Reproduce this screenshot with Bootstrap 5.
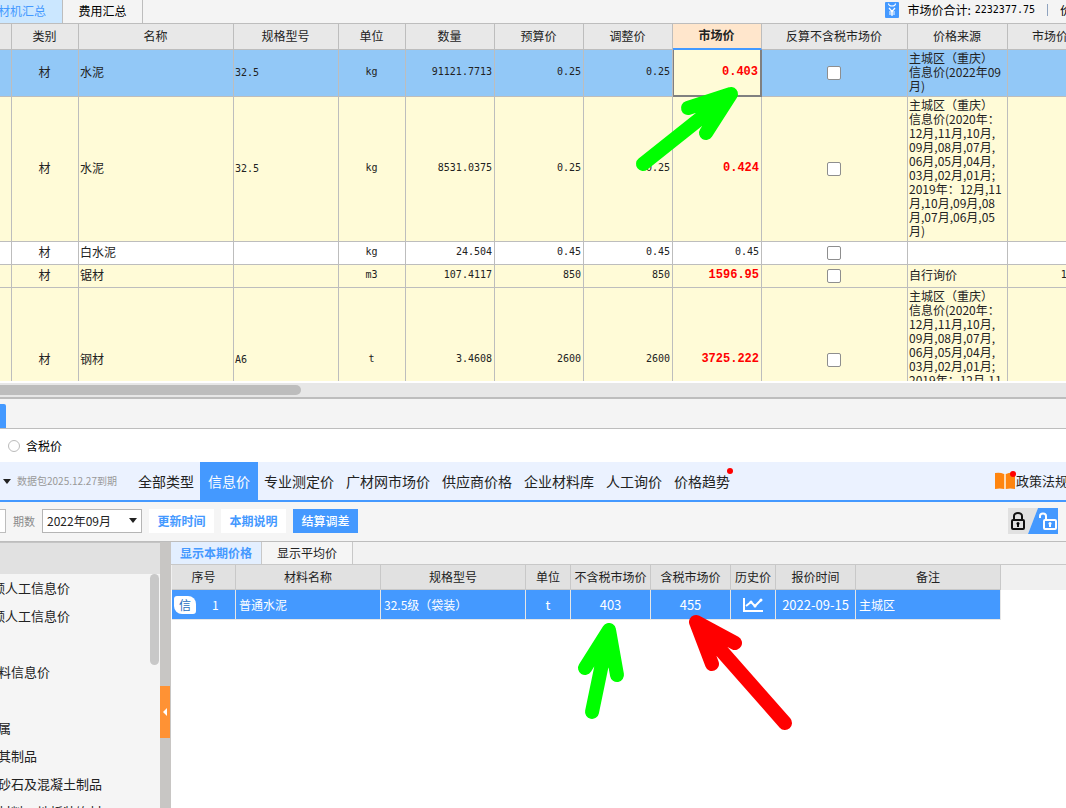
<!DOCTYPE html>
<html lang="zh-CN">
<head>
<meta charset="utf-8">
<meta name="viewport" content="width=device-width, initial-scale=1">
<title>人材机汇总</title>
<link href="https://cdn.jsdelivr.net/npm/bootstrap@5.3.0/dist/css/bootstrap.min.css" rel="stylesheet">
<style>
  :root { --blue: #4499ff; --line: #bdbdbd; }
  body { font-family: "Noto Sans CJK SC", sans-serif; font-size: 12px; line-height: 14px; color: #222; background: #f4f4f4; }
  button, select, input { font: inherit; }
  a { color: inherit; text-decoration: none; }
  .nowrap { white-space: nowrap; }
  .mono { font-family: "DejaVu Sans Mono", monospace; font-size: 10px; }

  .topbar { height: 24px; border-bottom: 1px solid var(--line); }
  .toptab { width: 80px; border: 0; border-right: 1px solid var(--line); background: none; padding: 0 0 2px; color: #000; }
  .toptab.first { width: 63px; background: #cbe7ff; color: var(--blue); display: flex; align-items: center; justify-content: flex-end; padding-right: 16px; }
  .total-sep { width: 1px; height: 12px; margin: 0 12px; background: #8fa3bf; }
  .next-total { width: 6px; }

  .sheet-pane { flex: 357 1 0; min-height: 0; overflow: hidden; border-bottom: 2px solid #fff; }
  .sheet { table-layout: fixed; width: 1118px; border-collapse: separate; border-spacing: 0; }
  .sheet th, .sheet td { border-right: 1px solid var(--line); border-bottom: 1px solid var(--line); padding: 0 2px 2px 1px; vertical-align: middle; overflow: hidden; white-space: nowrap; }
  .sheet th { height: 26px; background: #e8e8e8; font-weight: 400; text-align: center; }
  .sheet th.current { background: #ffe6cc; font-weight: 700; border-bottom: 2px solid var(--blue); }
  .sheet .mid { text-align: center; }
  .sheet .num { text-align: right; font-family: "DejaVu Sans Mono", monospace; font-size: 10px; }
  .sheet .changed { color: #f00; font-family: "Liberation Mono", monospace; font-size: 12px; font-weight: 700; }
  .sheet .short td { height: 23px; }
  .sheet .medium td { height: 47px; }
  .sheet .tall td { height: 145px; }
  .row-picked td { background: #92c8f7; }
  .row-edited td { background: #fffbd7; }
  .row-plain td { background: #fff; }
  .sheet td.cell-focus { background: #fffbd7; border-right: 2px solid #808080; border-bottom: 2px solid #808080; box-shadow: inset 1px 0 #808080; }
  .sheet td.tick { padding-bottom: 0; }
  .sheet .form-check-input { width: 14px; height: 14px; border: 1px solid #8e8e8e; border-radius: 2px; background-color: #fff; display: block; margin: 0 auto; }

  .hscroll { height: 16px; background: #e7e7e7; border-bottom: 2px solid var(--line); padding: 2px 0; }
  .hscroll-thumb { width: 301px; height: 10px; background: var(--line); border-radius: 0 5px 5px 0; }
  .gapbar { height: 30px; border-bottom: 1px solid var(--line); }
  .gapbar-tab { width: 6px; height: 24px; background: var(--blue); border-radius: 0 2px 0 0; }
  .taxline { height: 33px; background: #fff; padding-left: 8px; color: #000; gap: 6px; }
  .taxline .form-check-input { width: 12px; height: 12px; margin: 0; border: 1px solid #bbb; }
  .kinds { height: 40px; background: #ebf2ff; border-bottom: 2px solid var(--blue); }
  .caret { width: 0; height: 0; border: 4px solid transparent; border-top: 5px solid #222; border-bottom: 0; }
  .pack-row { gap: 6px; padding-left: 3px; }
  .pack { width: 115px; font-size: 10px; color: #999; }
  .kind { font-size: 14px; line-height: 20px; padding: 0 6px; }
  .kind.on { background: var(--blue); color: #fff; padding: 0 8px; }
  .dot { position: absolute; width: 6px; height: 6px; border-radius: 50%; background: #f00; top: -3px; right: -3px; }
  .policy { font-size: 13px; line-height: 18px; width: 72px; overflow: hidden; }

  .tools { height: 40px; background: #f5f5f5; border-bottom: 1px solid var(--line); padding-bottom: 1px; }
  .tool-row { gap: 7px; }
  .box-end { width: 6px; height: 24px; background: #fff; border: 1px solid var(--line); border-left: 0; }
  .period-label { width: 36px; padding-left: 7px; font-size: 11px; color: #8a8a8a; }
  .period { width: 100px; height: 24px; border: 1px solid #b5b5b5; background: #fff; padding: 0 4px; appearance: none; border-radius: 0; color: #222; }
  .period-arrow { position: absolute; right: 5px; top: 9px; pointer-events: none; }
  .tool { width: 65px; height: 24px; border: 0; padding: 0; background: #fff; color: var(--blue); font-weight: 700; }
  .tool.on { background: var(--blue); color: #fff; font-weight: 500; }

  .lower { flex: 266 1 0; min-height: 0; background: #fff; }
  .tree { width: 160px; background: #f5f5f5; }
  .tree-head { height: 32px; flex: none; background: #e1e1e1; border-top: 1px solid #c4c4c4; }
  .tree ul { font-size: 13px; line-height: 28px; }
  .tree li { height: 28px; margin-left: -2px; white-space: nowrap; }
  .tree li.deep { margin-left: -8px; }
  .tree-track { width: 10px; }
  .tree-thumb { width: 9px; height: 91px; border-radius: 5px; background: #c8c8c8; }
  .splitter { width: 11px; background: #c8c6c4; padding-top: 74px; }
  .fold { width: 10px; height: 52px; background: #ff9234; border: 0; padding: 0; }
  .subtabs { height: 23px; background: #f2f2f2; border-bottom: 1px solid #c8c8c8; }
  .subtab { width: 91px; border: 0; border-right: 1px solid #c8c8c8; background: #f5f5f5; padding: 0; color: #222; }
  .subtab.on { background: #e3efff; color: var(--blue); font-weight: 700; }
  .prices { table-layout: fixed; width: 829px; border-collapse: separate; border-spacing: 0; margin-left: 1px; }
  .prices th { height: 25px; padding: 0; font-weight: 400; text-align: center; background: #e1e1e1; border-right: 1px solid #c8c8c8; border-bottom: 1px solid #c8c8c8; white-space: nowrap; }
  .prices td { height: 30px; padding: 0 3px; background: var(--blue); color: #fff; border-right: 1px solid #e6e6e6; border-bottom: 1px solid #e6e6e6; white-space: nowrap; }
  .prices .fig { font-size: 13px; text-align: center; padding: 0; }
  .price-pane { background: linear-gradient(#f0f0f0 25px, #fff 25px); }
  .xin { width: 22px; height: 18px; margin-left: -1px; background: #fff; color: #2a6fc0; border-radius: 3px 8px 3px 8px; line-height: 17px; text-align: center; }
  .marks { position: absolute; left: 0; top: 0; pointer-events: none; }
</style>
</head>
<body class="vh-100 overflow-hidden d-flex flex-column position-relative">

<header class="topbar d-flex align-items-stretch flex-shrink-0 overflow-hidden">
  <button class="toptab first nowrap overflow-hidden" type="button">人材机汇总</button>
  <button class="toptab" type="button">费用汇总</button>
  <div class="ms-auto d-flex align-items-center nowrap text-black pb-1">
    <svg width="14" height="16" viewBox="0 0 14 16" class="me-2"><rect width="14" height="16" rx="1" fill="#4499ff"/><path d="M3.500 1.500a3.500 2.500 0 0 0 7 0M4 6l3 3.500L10 6M7 9.500V14M4 10h6M4 12h6" fill="none" stroke="#fff" stroke-width="1.200"/></svg>
    <span>市场价合计:</span><span class="mono ms-1">2232377.75</span>
    <span class="total-sep"></span><span class="next-total">价</span>
  </div>
</header>

<main class="sheet-pane">
  <table class="sheet">
    <colgroup><col style="width:12px"><col style="width:67px"><col style="width:155px"><col style="width:105px"><col style="width:67px"><col style="width:89px"><col style="width:89px"><col style="width:89px"><col style="width:89px"><col style="width:146px"><col style="width:100px"><col style="width:110px"></colgroup>
    <thead><tr><th></th><th>类别</th><th>名称</th><th>规格型号</th><th>单位</th><th>数量</th><th>预算价</th><th>调整价</th><th class="current">市场价</th><th>反算不含税市场价</th><th>价格来源</th><th>市场价合计</th></tr></thead>
    <tbody>
      <tr class="medium row-picked"><td></td><td class="mid">材</td><td>水泥</td><td><span class="mono">32.5</span></td><td class="mid mono">kg</td><td class="num">91121.7713</td><td class="num">0.25</td><td class="num">0.25</td><td class="num changed cell-focus">0.403</td><td class="tick"><input class="form-check-input" type="checkbox" aria-label="反算不含税市场价"></td><td>主城区（重庆）<br>信息价(2022年09<br>月)</td><td></td></tr>
      <tr class="tall row-edited"><td></td><td class="mid">材</td><td>水泥</td><td><span class="mono">32.5</span></td><td class="mid mono">kg</td><td class="num">8531.0375</td><td class="num">0.25</td><td class="num">0.25</td><td class="num changed">0.424</td><td class="tick"><input class="form-check-input" type="checkbox" aria-label="反算不含税市场价"></td><td>主城区（重庆）<br>信息价(2020年：<br>12月,11月,10月,<br>09月,08月,07月,<br>06月,05月,04月,<br>03月,02月,01月;<br>2019年：12月,11<br>月,10月,09月,08<br>月,07月,06月,05<br>月)</td><td></td></tr>
      <tr class="short row-plain"><td></td><td class="mid">材</td><td>白水泥</td><td></td><td class="mid mono">kg</td><td class="num">24.504</td><td class="num">0.45</td><td class="num">0.45</td><td class="num">0.45</td><td class="tick"><input class="form-check-input" type="checkbox" aria-label="反算不含税市场价"></td><td></td><td></td></tr>
      <tr class="short row-edited"><td></td><td class="mid">材</td><td>锯材</td><td></td><td class="mid mono">m3</td><td class="num">107.4117</td><td class="num">850</td><td class="num">850</td><td class="num changed">1596.95</td><td class="tick"><input class="form-check-input" type="checkbox" aria-label="反算不含税市场价"></td><td>自行询价</td><td class="num">171531.11</td></tr>
      <tr class="tall row-edited"><td></td><td class="mid">材</td><td>钢材</td><td><span class="mono">A6</span></td><td class="mid mono">t</td><td class="num">3.4608</td><td class="num">2600</td><td class="num">2600</td><td class="num changed">3725.222</td><td class="tick"><input class="form-check-input" type="checkbox" aria-label="反算不含税市场价"></td><td>主城区（重庆）<br>信息价(2020年：<br>12月,11月,10月,<br>09月,08月,07月,<br>06月,05月,04月,<br>03月,02月,01月;<br>2019年：12月,11<br>月,10月,09月,08<br>月,07月,06月,05<br>月)</td><td></td></tr>
    </tbody>
  </table>
</main>

<div class="hscroll flex-shrink-0"><div class="hscroll-thumb"></div></div>
<div class="gapbar d-flex align-items-end flex-shrink-0"><div class="gapbar-tab"></div></div>

<div class="taxline d-flex align-items-center flex-shrink-0">
  <input class="form-check-input" type="radio" id="tax"><label for="tax">含税价</label>
</div>

<nav class="kinds d-flex align-items-stretch flex-shrink-0 nowrap">
  <div class="pack-row d-flex align-items-center flex-shrink-0"><span class="caret"></span><span class="pack">数据包2025.12.27到期</span></div>
  <a href="#" class="kind d-flex align-items-center">全部类型</a>
  <a href="#" class="kind on d-flex align-items-center">信息价</a>
  <a href="#" class="kind d-flex align-items-center">专业测定价</a>
  <a href="#" class="kind d-flex align-items-center">广材网市场价</a>
  <a href="#" class="kind d-flex align-items-center">供应商价格</a>
  <a href="#" class="kind d-flex align-items-center">企业材料库</a>
  <a href="#" class="kind d-flex align-items-center">人工询价</a>
  <a href="#" class="kind d-flex align-items-center"><span class="position-relative">价格趋势<span class="dot"></span></span></a>
  <a href="#" class="policy ms-auto d-flex align-items-center flex-shrink-0">
    <svg width="22" height="20" viewBox="0 0 22 20" class="flex-shrink-0"><path d="M1 2q5-1 9 1v15q-4-1-9 0zM12 3q4-2 9-1v16q-5-1-9 0z" fill="#ff850f"/><path d="M10 3h2v15h-2z" fill="#ffd9b0"/><circle cx="19" cy="3" r="3" fill="#f00"/></svg>
    <span class="flex-shrink-0">政策法规</span>
  </a>
</nav>

<div class="tools d-flex align-items-center flex-shrink-0 nowrap">
  <span class="box-end"></span>
  <label for="period" class="period-label">期数</label>
  <span class="tool-row d-flex"><span class="position-relative"><select id="period" class="period d-block"><option>2022年09月</option></select><span class="caret period-arrow"></span></span>
  <button class="tool" type="button">更新时间</button><button class="tool" type="button">本期说明</button><button class="tool on" type="button">结算调差</button></span>
  <button type="button" class="ms-auto me-2 p-0 border-0 bg-transparent" aria-label="锁定">
    <svg width="50" height="26" viewBox="0 0 50 26" class="d-block"><path d="M0 0h30L20 26H0z" fill="#e1e1e1"/><path d="M30 0h20v26H20z" fill="#4499ff"/>
      <g fill="none" stroke="#111" stroke-width="2"><rect x="4" y="12" width="12" height="9" rx="1"/><path d="M6 12V8a4 3 0 0 1 8 0v4"/><path d="M10 15v4"/></g><circle cx="10" cy="15.500" r="1.500"/>
      <g fill="none" stroke="#fff" stroke-width="2"><rect x="36" y="12" width="12" height="9" rx="1"/><path d="M32 10V8a3 2.500 0 0 1 6 0v4"/><path d="M42 15v4"/></g><circle cx="42" cy="15.500" r="1.500" fill="#fff"/></svg>
  </button>
</div>

<section class="lower d-flex">
  <aside class="tree d-flex flex-column flex-shrink-0 overflow-hidden">
    <div class="tree-head"></div>
    <div class="d-flex flex-fill overflow-hidden">
      <ul class="list-unstyled m-0 flex-fill overflow-hidden">
        <li class="deep">额人工信息价</li><li class="deep">额人工信息价</li><li></li><li>料信息价</li><li></li><li>属</li><li>其制品</li><li>砂石及混凝土制品</li><li>材料、地板装饰材</li>
      </ul>
      <div class="tree-track flex-shrink-0"><div class="tree-thumb"></div></div>
    </div>
  </aside>
  <div class="splitter d-flex align-items-center flex-shrink-0">
    <button class="fold" type="button" aria-label="折叠"><svg width="10" height="10" viewBox="0 0 10 10" class="d-block"><path d="M3 5l4-4v8z" fill="#fff"/></svg></button>
  </div>
  <div class="flex-fill overflow-hidden d-flex flex-column">
    <div class="subtabs d-flex flex-shrink-0"><button class="subtab on" type="button">显示本期价格</button><button class="subtab" type="button">显示平均价</button></div>
    <div class="price-pane flex-fill">
      <table class="prices">
        <colgroup><col style="width:64px"><col style="width:145px"><col style="width:145px"><col style="width:45px"><col style="width:80px"><col style="width:80px"><col style="width:45px"><col style="width:80px"><col style="width:145px"></colgroup>
        <thead><tr><th>序号</th><th>材料名称</th><th>规格型号</th><th>单位</th><th>不含税市场价</th><th>含税市场价</th><th>历史价</th><th>报价时间</th><th>备注</th></tr></thead>
        <tbody><tr><td><div class="d-flex align-items-center"><span class="xin">信</span><span class="ms-3">1</span></div></td><td>普通水泥</td><td>32.5级（袋装）</td><td class="fig">t</td><td class="fig">403</td><td class="fig">455</td><td class="fig"><svg width="20" height="16" viewBox="0 0 20 16"><path d="M1 1v13h19M3 9l5-4 4 4 6-6" fill="none" stroke="#fff" stroke-width="2"/><circle cx="8" cy="5" r="1.500" fill="#fff"/><circle cx="12" cy="9" r="1.500" fill="#fff"/><circle cx="18" cy="3" r="1.500" fill="#fff"/></svg></td><td class="fig">2022-09-15</td><td>主城区</td></tr></tbody>
      </table>
    </div>
  </div>
</section>

<!-- hand-drawn arrows over the prices being compared -->
<svg class="marks" width="1066" height="808" viewBox="0 0 1066 808" stroke-width="14" stroke-linecap="round" stroke-linejoin="round">
  <g stroke="#0f0" fill="none"><path d="M643 164L731 94M688 108L731 94L706 133"/><path d="M592 712L609 630M585 668L609 630L617 675"/></g>
  <path stroke="#f00" fill="none" d="M785 723L696 622M735 643L696 622L712 664"/>
  <path fill="#0f0" d="M731 94L688 108L699 112L705 122L706 133zM609 630L585 668L596 664L608 667L617 675z"/>
  <path fill="#f00" d="M696 622L735 643L725 646L716 654L712 664z"/>
</svg>

<script src="https://cdn.jsdelivr.net/npm/bootstrap@5.3.0/dist/js/bootstrap.bundle.min.js"></script>
</body>
</html>
